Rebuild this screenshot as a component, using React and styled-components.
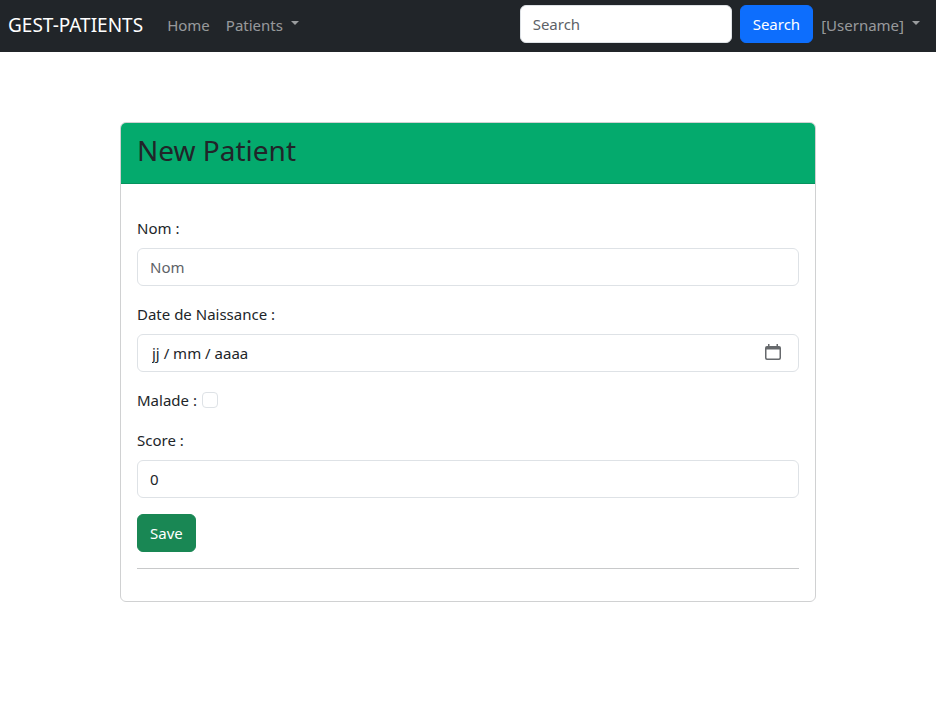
import React from "react";
import styled, { createGlobalStyle } from "styled-components";

const GlobalStyle = createGlobalStyle`
  *, *::before, *::after { box-sizing: border-box; }
  body {
    margin: 0;
    background: #fff;
    color: #212529;
    font-family: "Segoe UI", "Noto Sans", "Open Sans", sans-serif;
    font-size: 15px;
    line-height: 24px;
  }
  button, input { font: inherit; color: inherit; margin: 0; }
`;

const Navbar = styled.nav`
  display: flex;
  align-items: center;
  padding: 4px 8px 8px;
  background: #212529;
`;

const Brand = styled.a`
  margin-right: 16px;
  padding-top: 2px;
  color: #fff;
  font-size: 19px;
  line-height: 32px;
  text-decoration: none;
`;

const NavList = styled.ul`
  display: flex;
  flex: ${(p) => (p.$grow ? 1 : "none")};
  margin: 0;
  padding: 0;
  list-style: none;
`;

const NavLink = styled.a`
  display: block;
  padding: 9px 8px 7px;
  color: rgba(255, 255, 255, 0.55);
  text-decoration: none;
`;

const NavToggle = styled.button`
  display: flex;
  align-items: center;
  gap: 8px;
  padding: 9px 8px 7px;
  border: 0;
  background: none;
  color: rgba(255, 255, 255, 0.55);

  &::after {
    content: "";
    margin-bottom: 4px;
    border-top: 4px solid;
    border-right: 4px solid transparent;
    border-left: 4px solid transparent;
  }
`;

const SearchForm = styled.form`
  display: flex;
  gap: 8px;
`;

const Input = styled.input`
  display: block;
  width: ${(p) => p.$width || "100%"};
  height: 38px;
  padding: 6px 12px;
  border: 1px solid #dee2e6;
  border-radius: 6px;
  background: #fff;
  appearance: textfield;

  &::placeholder { color: #5d6267; opacity: 1; }
  &::-webkit-inner-spin-button { appearance: none; margin: 0; }
`;

const Button = styled.button`
  height: 38px;
  padding: 6px 12px;
  border: 1px solid ${(p) => p.$color};
  border-radius: 6px;
  background: ${(p) => p.$color};
  color: #fff;
`;

const Main = styled.main`
  max-width: 720px;
  margin: 70px auto 0;
  padding: 0 12px;
`;

const Card = styled.section`
  border: 1px solid #d0d1d2;
  border-radius: 6px;
  overflow: hidden;
`;

const CardHeader = styled.header`
  padding: 8px 16px 14px;
  border-bottom: 1px solid #05935e;
  background: #04aa6d;
`;

const Title = styled.h2`
  margin: 0;
  font-size: 28px;
  font-weight: 400;
  line-height: 38px;
`;

const CardBody = styled.form`
  display: flex;
  flex-direction: column;
  gap: 16px;
  padding: 32px 16px;
`;

const Field = styled.div`
  display: flex;
  flex-direction: column;
  gap: 8px;
`;

const CheckField = styled.div`
  display: flex;
  align-items: center;
  gap: 5px;
`;

const Checkbox = styled.input`
  width: 16px;
  height: 16px;
  border: 1px solid #dee2e6;
  border-radius: 4px;
  background: #fff;
  appearance: none;

  &:checked { background: #0d6efd; border-color: #0d6efd; }
`;

const DateBox = styled.div`
  display: flex;
  align-items: center;
  height: 38px;
  padding: 0 16px 0 14px;
  border: 1px solid #dee2e6;
  border-radius: 6px;
`;

const DateInput = styled.input`
  flex: 1;
  min-width: 0;
  padding: 0;
  border: 0;
  outline: 0;
  background: none;

  &::placeholder { color: #212529; opacity: 1; }
`;

const IconButton = styled.button`
  display: flex;
  padding: 0;
  border: 0;
  background: none;
  color: #66696c;
`;

const Divider = styled.hr`
  width: 100%;
  margin: 0;
  border: 0;
  border-top: 1px solid #c8c9ca;
`;

function CalendarIcon() {
  return (
    <svg width="18" height="18" viewBox="0 0 18 18" aria-hidden="true">
      <path
        fill="currentColor"
        fillRule="evenodd"
        d="M4 0h1.500v2h7V0H14v2h1a2 2 0 0 1 2 2v10a2 2 0 0 1-2 2H3a2 2 0 0 1-2-2V4a2 2 0 0 1 2-2h1zM2.500 5.500v8.200c0 .5.3.8.8.8h11.400c.5 0 .8-.3.8-.8V5.500z"
      />
    </svg>
  );
}

export default function App() {
  return (
    <>
      <GlobalStyle />
      <Navbar>
        <Brand href="#">GEST-PATIENTS</Brand>
        <NavList $grow>
          <li><NavLink href="#">Home</NavLink></li>
          <li><NavToggle type="button" aria-haspopup="menu">Patients</NavToggle></li>
        </NavList>
        <SearchForm role="search">
          <Input $width="212px" type="search" placeholder="Search" aria-label="Search" />
          <Button $color="#0d6efd" type="submit">Search</Button>
        </SearchForm>
        <NavList>
          <li><NavToggle type="button" aria-haspopup="menu">[Username]</NavToggle></li>
        </NavList>
      </Navbar>
      <Main>
        <Card>
          <CardHeader>
            <Title>New Patient</Title>
          </CardHeader>
          <CardBody>
            <Field>
              <label htmlFor="nom">Nom :</label>
              <Input id="nom" type="text" placeholder="Nom" />
            </Field>
            <Field>
              <label htmlFor="naissance">Date de Naissance :</label>
              <DateBox>
                <DateInput id="naissance" type="text" placeholder="jj / mm / aaaa" />
                <IconButton type="button" aria-label="Calendrier">
                  <CalendarIcon />
                </IconButton>
              </DateBox>
            </Field>
            <CheckField>
              <label htmlFor="malade">Malade :</label>
              <Checkbox id="malade" type="checkbox" />
            </CheckField>
            <Field>
              <label htmlFor="score">Score :</label>
              <Input id="score" type="number" defaultValue="0" />
            </Field>
            <div>
              <Button $color="#198754" type="submit">Save</Button>
            </div>
            <Divider />
          </CardBody>
        </Card>
      </Main>
    </>
  );
}
